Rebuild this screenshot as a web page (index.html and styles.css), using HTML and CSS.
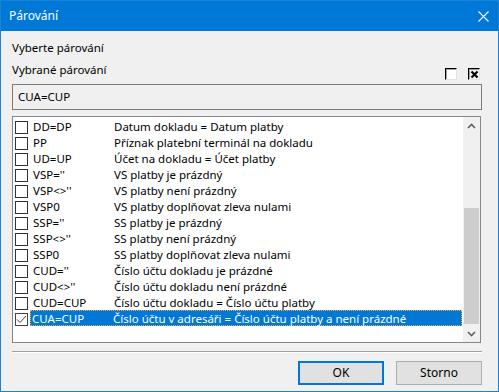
FILE: index.html
```html
<!DOCTYPE html>
<html lang="cs">
<head>
<meta charset="utf-8">
<title>Párování</title>
<link rel="stylesheet" href="styles.css">
</head>
<body>
<div class="window">
  <div class="titlebar">
    <span class="title">Párování</span>
    <svg class="close" width="11" height="11" viewBox="0 0 11 11"><path d="M0.5 0.5 L10.5 10.5 M10.5 0.5 L0.5 10.5" stroke="#fff" stroke-width="1.1" fill="none"/></svg>
  </div>
  <div class="content">
    <div class="label first">Vyberte párování</div>
    <div class="label-row">
      <span class="label">Vybrané párování</span>
      <span class="tools">
        <span class="cb3d"></span>
        <span class="cb3d checked"><svg width="9" height="9" viewBox="0 0 9 9"><path d="M1.5 1.5 L7.5 7.5 M7.5 1.5 L1.5 7.5" stroke="#000" stroke-width="2.2" fill="none"/></svg></span>
      </span>
    </div>
    <div class="input">CUA=CUP</div>
    <div class="listbox">
      <ul class="items">
        <li class="item"><span class="cb"></span><span class="text"><span class="code">DD=DP</span><span class="desc">Datum dokladu = Datum platby</span></span></li>
        <li class="item"><span class="cb"></span><span class="text"><span class="code">PP</span><span class="desc">Příznak platební terminál na dokladu</span></span></li>
        <li class="item"><span class="cb"></span><span class="text"><span class="code">UD=UP</span><span class="desc">Účet na dokladu = Účet platby</span></span></li>
        <li class="item"><span class="cb"></span><span class="text"><span class="code">VSP=''</span><span class="desc">VS platby je prázdný</span></span></li>
        <li class="item"><span class="cb"></span><span class="text"><span class="code">VSP&lt;&gt;''</span><span class="desc">VS platby není prázdný</span></span></li>
        <li class="item"><span class="cb"></span><span class="text"><span class="code">VSP0</span><span class="desc">VS platby doplňovat zleva nulami</span></span></li>
        <li class="item"><span class="cb"></span><span class="text"><span class="code">SSP=''</span><span class="desc">SS platby je prázdný</span></span></li>
        <li class="item"><span class="cb"></span><span class="text"><span class="code">SSP&lt;&gt;''</span><span class="desc">SS platby není prázdný</span></span></li>
        <li class="item"><span class="cb"></span><span class="text"><span class="code">SSP0</span><span class="desc">SS platby doplňovat zleva nulami</span></span></li>
        <li class="item"><span class="cb"></span><span class="text"><span class="code">CUD=''</span><span class="desc">Číslo účtu dokladu je prázdné</span></span></li>
        <li class="item"><span class="cb"></span><span class="text"><span class="code">CUD&lt;&gt;''</span><span class="desc">Číslo účtu dokladu není prázdné</span></span></li>
        <li class="item"><span class="cb"></span><span class="text"><span class="code">CUD=CUP</span><span class="desc">Číslo účtu dokladu = Číslo účtu platby</span></span></li>
        <li class="item selected"><span class="cb"><svg width="11" height="11" viewBox="0 0 11 11"><path d="M1 5.5 L4 8.5 L10 2" stroke="#444" stroke-width="1" fill="none"/></svg></span><span class="text"><span class="code">CUA=CUP</span><span class="desc">Číslo účtu v adresáři = Číslo účtu platby a není prázdné</span></span></li>
      </ul>
      <div class="scrollbar">
        <div class="arrow"><svg width="9" height="6" viewBox="0 0 9 6"><path d="M1 5 L4.5 1.5 L8 5" stroke="#606060" stroke-width="1.6" fill="none"/></svg></div>
        <div class="track"><div class="thumb"></div></div>
        <div class="arrow"><svg width="9" height="6" viewBox="0 0 9 6"><path d="M1 1 L4.5 4.5 L8 1" stroke="#606060" stroke-width="1.6" fill="none"/></svg></div>
      </div>
    </div>
    <div class="separator"></div>
    <div class="buttons">
      <button class="btn default">OK</button>
      <button class="btn">Storno</button>
    </div>
  </div>
</div>
</body>
</html>
```
FILE: styles.css
```css
* { box-sizing: border-box; }
html, body { margin: 0; padding: 0; }
body {
  width: 499px;
  height: 392px;
  font-family: "Noto Sans", "Liberation Sans", sans-serif;
  font-size: 11.5px;
  color: #000;
  background: #f0f0f0;
  overflow: hidden;
}
.window {
  width: 499px;
  height: 392px;
  border: 1px solid #1883d7;
  background: #f0f0f0;
  display: flex;
  flex-direction: column;
}
.titlebar {
  height: 30px;
  background: #0078d7;
  color: #fff;
  display: flex;
  align-items: center;
  justify-content: space-between;
  padding: 0 9px 0 8px;
  flex: none;
}
.title { font-size: 12px; line-height: 16px; }
.close { display: block; }
.content {
  flex: 1;
  display: flex;
  flex-direction: column;
  padding: 9px 17px 0 11px;
}
.label { line-height: 16px; height: 16px; display: block; }
.label.first { margin-bottom: 6px; }
.label-row {
  display: flex;
  justify-content: space-between;
  align-items: center;
  height: 16px;
}
.tools { display: flex; gap: 11px; margin-top: 8px; margin-right: 1px; }
.cb3d {
  width: 12px;
  height: 12px;
  background: #fff;
  border-top: 1px solid #000;
  border-left: 1px solid #000;
  border-right: 1px solid #e3e3e3;
  border-bottom: 1px solid #e3e3e3;
  box-shadow: inset 1px 1px 0 #a0a0a0;
  display: flex;
  align-items: center;
  justify-content: center;
}
.cb3d.checked { background: #f0f0f0; }
.cb3d svg { display: block; }
.input {
  margin-top: 6px;
  height: 26px;
  border: 1px solid #7a7a7a;
  background: #f0f0f0;
  padding: 0 5px;
  line-height: 23px;
  width: 470px;
}
.listbox {
  margin-top: 6px;
  height: 227px;
  border: 1px solid #828790;
  background: #fff;
  display: flex;
  width: 469px;
}
.items {
  list-style: none;
  margin: 0;
  padding: 1px 1px 0 0;
  flex: 1;
}
.item {
  height: 16px;
  display: flex;
  align-items: center;
}
.cb {
  width: 13px;
  height: 13px;
  border: 1px solid #333;
  background: #fff;
  margin-left: 2px;
  margin-right: 2px;
  margin-top: 2px;
  display: flex;
  align-items: center;
  justify-content: center;
  flex: none;
}
.cb svg { display: block; }
.text {
  flex: 1;
  height: 16px;
  display: flex;
  align-items: center;
  padding-left: 2px;
  border: 1px solid transparent;
  white-space: nowrap;
}
.code { width: 81px; flex: none; }
.selected .text {
  background: #0078d7;
  color: #fff;
  border: 1px dotted #f7a23a;
  padding-left: 1px;
}
.selected .cb { border-color: #444; }
.scrollbar {
  width: 17px;
  flex: none;
  background: #f0f0f0;
  display: flex;
  flex-direction: column;
}
.arrow {
  height: 17px;
  display: flex;
  align-items: center;
  justify-content: center;
  flex: none;
}
.arrow svg { display: block; }
.track {
  flex: 1;
  display: flex;
  flex-direction: column;
  justify-content: flex-end;
  padding: 0 1px 0 1px;
}
.thumb {
  height: 116px;
  background: #cdcdcd;
  margin-bottom: 1px;
}
.separator {
  margin-top: 8px;
  height: 2px;
  border-top: 1px solid #a0a0a0;
  border-bottom: 1px solid #fff;
  width: 470px;
}
.buttons {
  display: flex;
  justify-content: flex-end;
  gap: 12px;
  margin-top: 8px;
  margin-right: -1px;
}
.btn {
  width: 86px;
  height: 24px;
  font-family: inherit;
  font-size: 12px;
  background: #e1e1e1;
  border: 1px solid #adadad;
  color: #000;
  padding: 0;
  line-height: 20px;
}
.btn.default { border: 2px solid #0078d7; }
```
